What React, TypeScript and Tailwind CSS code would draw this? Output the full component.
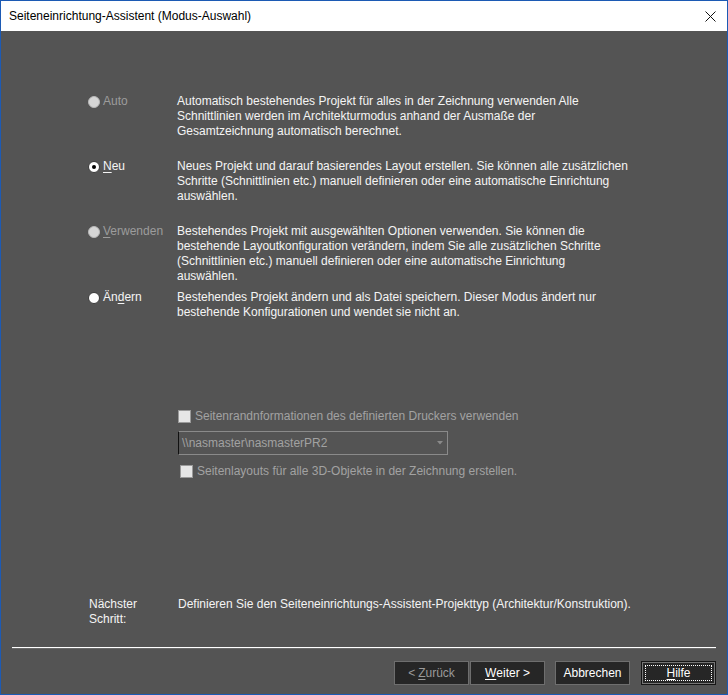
const font = { fontFamily: '"Liberation Sans", Arial, sans-serif' };

function Radio({ checked, disabled }: { checked?: boolean; disabled?: boolean }) {
  return (
    <span
      className={
        "flex h-[12px] w-[12px] shrink-0 items-center justify-center rounded-full border " +
        (disabled ? "border-[#b8b8b8] bg-[#d6d6d6]" : "border-[#3a3a3a] bg-white")
      }
    >
      {checked && <span className="h-[4px] w-[4px] rounded-full bg-black" />}
    </span>
  );
}

function Checkbox() {
  return <span className="h-[13px] w-[13px] shrink-0 border border-[#9a9a9a] bg-[#e6e6e6]" />;
}

interface ModeRowProps {
  label: React.ReactNode;
  lines: string[];
  checked?: boolean;
  disabled?: boolean;
  className?: string;
}

function ModeRow({ label, lines, checked, disabled, className }: ModeRowProps) {
  return (
    <div className={"flex " + (className ?? "")}>
      <div className="flex h-[15px] w-[89px] items-center gap-[3px]">
        <Radio checked={checked} disabled={disabled} />
        <span className={disabled ? "text-[#9c9c9c]" : "text-[#f4f4f4]"}>{label}</span>
      </div>
      <div className="text-[#f4f4f4]">
        {lines.map((l, i) => (
          <div key={i} className="h-[15px]">
            {l}
          </div>
        ))}
      </div>
    </div>
  );
}

function Button({
  children,
  disabled,
  focused,
  className,
}: {
  children: React.ReactNode;
  disabled?: boolean;
  focused?: boolean;
  className?: string;
}) {
  if (focused) {
    return (
      <div className={"h-[24px] w-[75px] border border-[#151515] " + (className ?? "")}>
        <div className="h-full w-full border border-[#767676] bg-[#262626] p-[2px]">
          <div className="flex h-full w-full items-center justify-center border border-dotted border-white text-white">
            {children}
          </div>
        </div>
      </div>
    );
  }
  return (
    <div
      className={
        "flex h-[24px] w-[75px] items-center justify-center border border-[#6e6e6e] bg-[#262626] " +
        (disabled ? "text-[#9a9a9a] " : "text-white ") +
        (className ?? "")
      }
    >
      {children}
    </div>
  );
}

export default function App() {
  return (
    <div
      className="flex h-[695px] w-[728px] flex-col border border-[#1c5ab4] bg-[#545454] text-[12px] leading-[15px]"
      style={font}
    >
      {/* title bar */}
      <div className="flex h-[30px] shrink-0 items-center justify-between bg-white pl-[8px] pr-[10px] text-black">
        <span>Seiteneinrichtung-Assistent (Modus-Auswahl)</span>
        <svg width="11" height="11" viewBox="0 0 11 11" className="mr-[1px]">
          <path d="M0.5 0.5 L10.5 10.5 M10.5 0.5 L0.5 10.5" stroke="#111" strokeWidth="1" />
        </svg>
      </div>

      <div className="flex flex-1 flex-col pl-[87px] pt-[63px]">
        <ModeRow
          label="Auto"
          disabled
          lines={[
            "Automatisch bestehendes Projekt für alles in der Zeichnung verwenden Alle",
            "Schnittlinien werden im Architekturmodus anhand der Ausmaße der",
            "Gesamtzeichnung automatisch berechnet.",
          ]}
        />
        <ModeRow
          className="mt-[20px]"
          checked
          label={
            <>
              <span className="underline underline-offset-2">N</span>eu
            </>
          }
          lines={[
            "Neues Projekt und darauf basierendes Layout erstellen. Sie können alle zusätzlichen",
            "Schritte (Schnittlinien etc.) manuell definieren oder eine automatische Einrichtung",
            "auswählen.",
          ]}
        />
        <ModeRow
          className="mt-[20px]"
          disabled
          label={
            <>
              <span className="underline underline-offset-2">V</span>erwenden
            </>
          }
          lines={[
            "Bestehendes Projekt mit ausgewählten Optionen verwenden. Sie können die",
            "bestehende Layoutkonfiguration verändern, indem Sie alle zusätzlichen Schritte",
            "(Schnittlinien etc.) manuell definieren oder eine automatische Einrichtung",
            "auswählen.",
          ]}
        />
        <ModeRow
          className="mt-[6px]"
          label={
            <>
              Än<span className="underline underline-offset-2">d</span>ern
            </>
          }
          lines={[
            "Bestehendes Projekt ändern und als Datei speichern. Dieser Modus ändert nur",
            "bestehende Konfigurationen und wendet sie nicht an.",
          ]}
        />

        {/* printer options */}
        <div className="ml-[90px] mt-[89px] flex flex-col text-[#a2a2a2]">
          <div className="flex h-[15px] items-center gap-[4px]">
            <Checkbox />
            <span>Seitenrandnformationen des definierten Druckers verwenden</span>
          </div>
          <div className="mt-[7px] flex h-[24px] w-[270px] items-center justify-between border border-[#8a8a8a] border-l-[#111] pl-[3px] pr-[4px]">
            <span>\\nasmaster\nasmasterPR2</span>
            <svg width="6" height="4" viewBox="0 0 6 4">
              <path d="M0 0 H6 L3 3.5 Z" fill="#8a8a8a" />
            </svg>
          </div>
          <div className="ml-[2px] mt-[9px] flex h-[15px] items-center gap-[4px]">
            <Checkbox />
            <span>Seitenlayouts für alle 3D-Objekte in der Zeichnung erstellen.</span>
          </div>
        </div>

        {/* next step */}
        <div className="mt-[118px] flex text-[#f4f4f4]">
          <div className="ml-[1px] w-[89px]">
            <div>Nächster</div>
            <div>Schritt:</div>
          </div>
          <div>Definieren Sie den Seiteneinrichtungs-Assistent-Projekttyp (Architektur/Konstruktion).</div>
        </div>
      </div>

      {/* separator */}
      <div className="mx-[11px] h-[2px] shrink-0 border-t border-white bg-[#6a6a6a]" />

      {/* buttons */}
      <div className="flex shrink-0 justify-end pb-[9px] pr-[11px] pt-[12px]">
        <Button disabled>
          &lt; <span className="ml-[3px] underline underline-offset-2">Z</span>urück
        </Button>
        <Button className="ml-[1px]">
          <span className="underline underline-offset-2">W</span>eiter &gt;
        </Button>
        <Button className="ml-[10px]">Abbrechen</Button>
        <Button focused className="ml-[11px]">
          <span className="underline underline-offset-2">H</span>ilfe
        </Button>
      </div>
    </div>
  );
}
